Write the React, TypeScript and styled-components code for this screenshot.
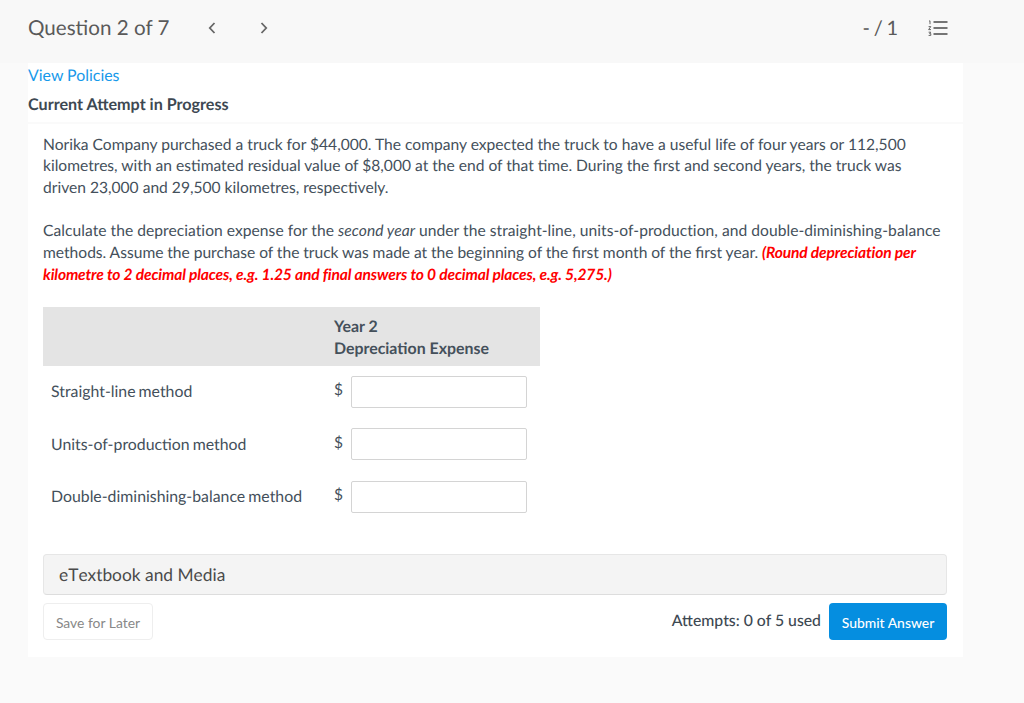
import React from "react";
import styled, { createGlobalStyle } from "styled-components";

const GlobalStyle = createGlobalStyle`
  html, body {
    margin: 0;
    padding: 0;
    background: #fafafa;
    font-family: Lato, "Liberation Sans", sans-serif;
    color: #44505b;
    text-rendering: geometricPrecision;
  }
`;

const Page = styled.div`
  width: 1024px;
  height: 703px;
  overflow: hidden;
`;

const Header = styled.header`
  height: 63px;
  background: #f8f8f8;
  display: flex;
  align-items: center;
  padding: 0 76px 8px 28px;
  box-sizing: border-box;
  color: #5a5a5a;
`;

const QuestionTitle = styled.div`
  font-size: 20.6px;
  width: 172px;
`;

const NavButton = styled.div`
  width: 24px;
  height: 24px;
  display: flex;
  align-items: center;
  justify-content: center;
  margin-right: 28px;
  color: #666;
`;

const Score = styled.div`
  margin-left: auto;
  font-size: 20px;
  word-spacing: -1.4px;
  margin-right: 30px;
`;

const Panel = styled.main`
  width: 935px;
  height: 594px;
  margin-left: 28px;
  background: #fff;
  display: flex;
  flex-direction: column;
`;

const PolicyLink = styled.a`
  color: #1799ea;
  font-size: 15.9px;
  line-height: 24px;
  margin-top: 1px;
`;

const AttemptTitle = styled.div`
  font-size: 16.15px;
  font-weight: 700;
  line-height: 20px;
  margin-top: 7px;
  padding-bottom: 7px;
  border-bottom: 2px solid #fafafa;
  color: #3d4852;
`;

const Body = styled.div`
  padding: 0 16px 0 15px;
  display: flex;
  flex-direction: column;
`;

const Paragraph = styled.p`
  margin: 0;
  font-size: 15.6px;
  line-height: 21.7px;
`;

const Question = styled(Paragraph)`
  margin-top: 10.6px;
`;

const Instructions = styled(Paragraph)`
  margin-top: 21.4px;
  word-spacing: -0.15px;
  &::first-line {
    letter-spacing: 0.045px;
    word-spacing: 0;
  }
`;

const Warning = styled.strong`
  color: #f00;
  font-style: italic;
  font-weight: 700;
  letter-spacing: -0.15px;
  word-spacing: 0;
`;

const Table = styled.div`
  width: 497px;
  margin-top: 21px;
`;

const TableHead = styled.div`
  height: 59px;
  background: #e4e4e4;
  padding: 9px 0 0 291px;
  box-sizing: border-box;
  font-size: 15.9px;
  font-weight: 700;
  line-height: 22px;
`;

const Row = styled.div`
  display: flex;
  align-items: center;
  height: 32px;
  margin-top: 20.4px;
  ${TableHead} + & {
    margin-top: 9.6px;
  }
`;

const RowLabel = styled.div`
  width: 291px;
  padding-left: 8px;
  box-sizing: border-box;
  font-size: 15.85px;
  word-spacing: -1px;
`;

const Currency = styled.div`
  width: 17px;
  font-size: 15.5px;
  position: relative;
  top: -1.5px;
`;

const AmountInput = styled.input`
  width: 176px;
  height: 32px;
  box-sizing: border-box;
  border: 1px solid #d4d4d4;
  border-radius: 2px;
  background: #fff;
  margin: 0;
`;

const MediaBar = styled.div`
  height: 41px;
  margin-top: 41.4px;
  padding: 0 0 0 15px;
  box-sizing: border-box;
  background: #f4f4f4;
  border: 1px solid #e6e6e6;
  border-bottom-color: #ddd;
  border-radius: 4px;
  display: flex;
  align-items: center;
  font-size: 17.35px;
  font-kerning: none;
  color: #4a4a4a;
`;

const Footer = styled.div`
  display: flex;
  align-items: center;
  margin-top: 8px;
`;

const SaveButton = styled.button`
  width: 110px;
  height: 37px;
  background: #fff;
  border: 1px solid #eee;
  border-radius: 4px;
  font-family: inherit;
  font-size: 13.9px;
  color: #888;
  padding: 2px 0 0;
`;

const Attempts = styled.div`
  margin-left: auto;
  font-size: 15.8px;
  font-weight: 500;
  margin-right: 8px;
  position: relative;
  top: -1px;
  color: #3d4852;
`;

const SubmitButton = styled.button`
  width: 118px;
  height: 37px;
  background: #058ee0;
  border: none;
  border-radius: 4px;
  font-family: inherit;
  font-size: 13.9px;
  font-weight: 500;
  color: #fff;
  padding: 2px 0 0;
`;

const Chevron = ({ dir }: { dir: "left" | "right" }) => (
  <svg width="8" height="12" viewBox="0 0 8 12" fill="none" stroke="currentColor" strokeWidth="1.8">
    <path d={dir === "left" ? "M6.5 1 L1.8 6 L6.5 11" : "M1.5 1 L6.2 6 L1.5 11"} />
  </svg>
);

const ListIcon = () => (
  <svg width="20" height="16" viewBox="0 0 20 16" fill="none">
    <g stroke="#666" strokeWidth="1.8">
      <path d="M5.5 2 H19.5" />
      <path d="M5.5 8 H19.5" />
      <path d="M5.5 14 H19.5" />
    </g>
    <g stroke="#666" strokeWidth="1">
      <path d="M1 1.2 L2 0.8 V4.2" />
      <path d="M0.6 6.6 H2.8 L0.6 9.6 H3" />
      <path d="M0.6 12.2 H2.8 L1.6 13.6 H2.8 V15.4 H0.6" />
    </g>
  </svg>
);

const rows = ["Straight-line method", "Units-of-production method", "Double-diminishing-balance method"];

export default function App() {
  return (
    <Page>
      <GlobalStyle />
      <Header>
        <QuestionTitle>Question 2 of 7</QuestionTitle>
        <NavButton><Chevron dir="left" /></NavButton>
        <NavButton><Chevron dir="right" /></NavButton>
        <Score>- / 1</Score>
        <ListIcon />
      </Header>
      <Panel>
        <PolicyLink>View Policies</PolicyLink>
        <AttemptTitle>Current Attempt in Progress</AttemptTitle>
        <Body>
          <Question>
            Norika Company purchased a truck for $44,000. The company expected the truck to have a useful life of four years or 112,500
            kilometres, with an estimated residual value of $8,000 at the end of that time. During the first and second years, the truck was
            driven 23,000 and 29,500 kilometres, respectively.
          </Question>
          <Instructions>
            Calculate the depreciation expense for the <em>second year</em> under the straight-line, units-of-production, and double-diminishing-balance
            methods. Assume the purchase of the truck was made at the beginning of the first month of the first year.{" "}
            <Warning>(Round depreciation per kilometre to 2 decimal places, e.g. 1.25 and final answers to 0 decimal places, e.g. 5,275.)</Warning>
          </Instructions>
          <Table>
            <TableHead>
              Year 2
              <br />
              Depreciation Expense
            </TableHead>
            {rows.map((label) => (
              <Row key={label}>
                <RowLabel>{label}</RowLabel>
                <Currency>$</Currency>
                <AmountInput />
              </Row>
            ))}
          </Table>
          <MediaBar>eTextbook and Media</MediaBar>
          <Footer>
            <SaveButton>Save for Later</SaveButton>
            <Attempts>Attempts: 0 of 5 used</Attempts>
            <SubmitButton>Submit Answer</SubmitButton>
          </Footer>
        </Body>
      </Panel>
    </Page>
  );
}
